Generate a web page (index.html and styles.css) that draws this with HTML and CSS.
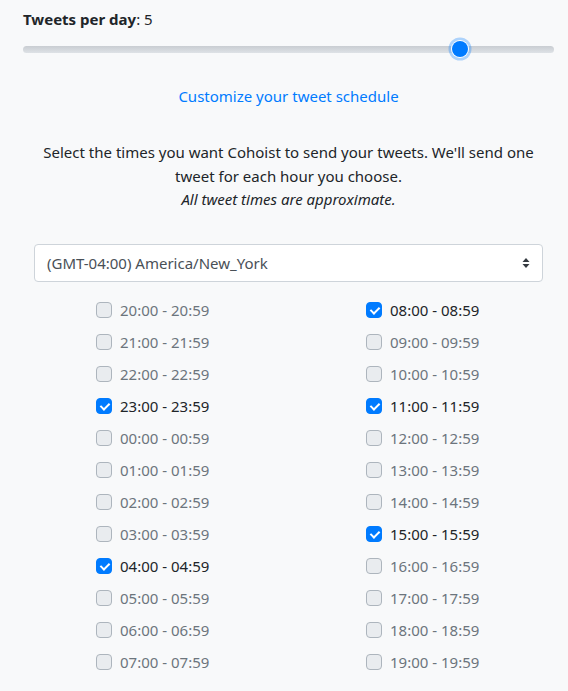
FILE: index.html
```html
<!DOCTYPE html>
<html lang="en">
<head>
    <meta charset="UTF-8">
    <title>Tweet Schedule</title>
    <link rel="stylesheet" href="styles.css">
</head>
<body>

    <!-- Schedule settings -->
    <div class="schedule">
        <div class="per-day"><strong>Tweets per day</strong>: 5</div>
        <input type="range" class="slider" min="0" max="6" value="5">

        <div class="customize"><a href="#">Customize your tweet schedule</a></div>

        <p class="intro">
            Select the times you want Cohoist to send your tweets. We'll send one tweet for each hour you choose.<br>
            <em>All tweet times are approximate.</em>
        </p>

        <!-- Timezone -->
        <div class="select-wrap">
            <select class="tz-select">
                <option>(GMT-04:00) America/New_York</option>
            </select>
            <svg class="select-arrows" width="8" height="10" viewBox="0 0 8 10">
                <path d="M4 0 L7.5 4 H0.5 Z M4 10 L0.5 6 H7.5 Z" fill="#343a40"/>
            </svg>
        </div>

        <!-- Hours -->
        <div class="hours">
            <label class="hour"><input type="checkbox"> 20:00 - 20:59</label>
            <label class="hour"><input type="checkbox"> 21:00 - 21:59</label>
            <label class="hour"><input type="checkbox"> 22:00 - 22:59</label>
            <label class="hour checked"><input type="checkbox" checked> 23:00 - 23:59</label>
            <label class="hour"><input type="checkbox"> 00:00 - 00:59</label>
            <label class="hour"><input type="checkbox"> 01:00 - 01:59</label>
            <label class="hour"><input type="checkbox"> 02:00 - 02:59</label>
            <label class="hour"><input type="checkbox"> 03:00 - 03:59</label>
            <label class="hour checked"><input type="checkbox" checked> 04:00 - 04:59</label>
            <label class="hour"><input type="checkbox"> 05:00 - 05:59</label>
            <label class="hour"><input type="checkbox"> 06:00 - 06:59</label>
            <label class="hour"><input type="checkbox"> 07:00 - 07:59</label>

            <label class="hour checked"><input type="checkbox" checked> 08:00 - 08:59</label>
            <label class="hour"><input type="checkbox"> 09:00 - 09:59</label>
            <label class="hour"><input type="checkbox"> 10:00 - 10:59</label>
            <label class="hour checked"><input type="checkbox" checked> 11:00 - 11:59</label>
            <label class="hour"><input type="checkbox"> 12:00 - 12:59</label>
            <label class="hour"><input type="checkbox"> 13:00 - 13:59</label>
            <label class="hour"><input type="checkbox"> 14:00 - 14:59</label>
            <label class="hour checked"><input type="checkbox" checked> 15:00 - 15:59</label>
            <label class="hour"><input type="checkbox"> 16:00 - 16:59</label>
            <label class="hour"><input type="checkbox"> 17:00 - 17:59</label>
            <label class="hour"><input type="checkbox"> 18:00 - 18:59</label>
            <label class="hour"><input type="checkbox"> 19:00 - 19:59</label>
        </div>
    </div>

</body>
</html>
```

FILE: styles.css
```css
/* Basic Reset */
* {
    margin: 0;
    padding: 0;
    box-sizing: border-box;
}

body {
    font-family: 'Noto Sans', sans-serif;
    font-size: 15px;
    color: #212529;
    background-color: #f8f9fa;
}

.schedule {
    padding: 8px 14px 0 23px;
}

/* Tweets per day */
.per-day {
    line-height: 22px;
}

.per-day strong {
    font-weight: 700;
}

/* Slider */
.slider {
    -webkit-appearance: none;
    appearance: none;
    display: block;
    width: 100%;
    height: 16px;
    margin-top: 11px;
    background: transparent;
}

.slider::-webkit-slider-runnable-track {
    height: 7px;
    border-radius: 4px;
    background: linear-gradient(#c9cdd2, #dee2e6);
}

.slider::-webkit-slider-thumb {
    -webkit-appearance: none;
    width: 16px;
    height: 16px;
    margin-top: -4.5px;
    border-radius: 50%;
    background-color: #007bff;
    box-shadow: 0 0 0 1px #fff, 0 0 0 3.5px rgba(0, 123, 255, 0.3);
}

/* Customize link */
.customize {
    text-align: center;
    margin-top: 27px;
    line-height: 24px;
}

.customize a {
    color: #007bff;
    text-decoration: none;
}

/* Intro text */
.intro {
    text-align: center;
    line-height: 23.5px;
    margin: 33px 10px 0;
}

/* Timezone select */
.select-wrap {
    position: relative;
    margin: 32px 11px 0;
}

.tz-select {
    -webkit-appearance: none;
    appearance: none;
    width: 100%;
    height: 38px;
    padding: 0 12px;
    font-family: inherit;
    font-size: 15px;
    color: #495057;
    background-color: #fff;
    border: 1px solid #ced4da;
    border-radius: 4px;
}

.select-arrows {
    position: absolute;
    right: 13px;
    top: 14px;
    pointer-events: none;
}

/* Hours grid */
.hours {
    display: grid;
    grid-template-columns: 270px 200px;
    grid-template-rows: repeat(12, 32px);
    grid-auto-flow: column;
    padding-left: 73px;
    margin-top: 12px;
}

.hour {
    display: flex;
    align-items: center;
    gap: 8px;
    color: #6c757d;
    cursor: pointer;
}

.hour.checked {
    color: #212529;
}

.hour input {
    -webkit-appearance: none;
    appearance: none;
    width: 16px;
    height: 16px;
    border: 1px solid #adb5bd;
    border-radius: 4px;
    background-color: #e9ecef;
    flex-shrink: 0;
}

.hour input:checked {
    border-color: #007bff;
    background-color: #007bff;
    position: relative;
}

.hour input:checked::after {
    content: "";
    position: absolute;
    left: 4.5px;
    top: 2px;
    width: 4px;
    height: 7px;
    border: solid #fff;
    border-width: 0 2px 2px 0;
    transform: rotate(45deg);
}
```
